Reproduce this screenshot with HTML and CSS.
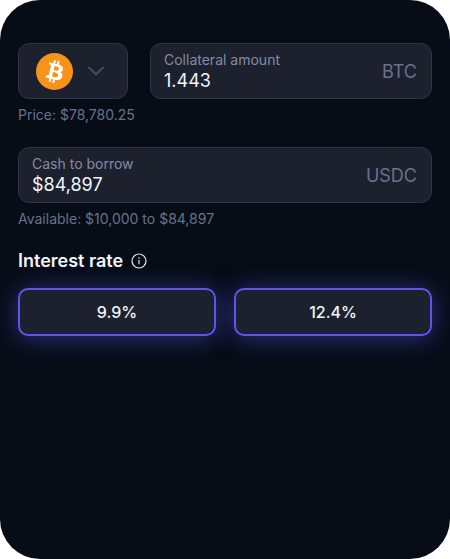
FILE: index.html
```
<!DOCTYPE html>
<html lang="en">
  <head>
    <meta charset="utf-8">
    <meta name="viewport" content="width=device-width, initial-scale=1">
    <title>Borrow</title>
    <link rel="stylesheet" href="styles.css">
  </head>
  <body>
    <form class="loan-card">
      <div class="collateral-row">
        <div class="coin-picker">
          <svg class="coin-icon" viewBox="0 0 32 32" aria-hidden="true">
            <circle cx="16" cy="16" r="16" fill="#f7931a"/>
            <path fill="#fff" d="M23.189 14.02c.314-2.096-1.283-3.223-3.465-3.975l.708-2.84-1.728-.43-.69 2.765c-.454-.114-.92-.22-1.385-.326l.695-2.783L15.596 6l-.708 2.839c-.376-.086-.746-.17-1.104-.26l.002-.009-2.384-.595-.46 1.846s1.283.294 1.256.312c.7.175.826.638.805 1.006l-.806 3.235c.048.012.11.03.18.057l-.183-.045-1.13 4.532c-.086.212-.303.531-.793.41.018.025-1.256-.313-1.256-.313l-.858 1.978 2.25.561c.418.105.828.215 1.231.318l-.715 2.872 1.727.43.708-2.84c.472.127.93.245 1.378.357l-.706 2.828 1.728.43.715-2.866c2.948.558 5.164.333 6.097-2.333.752-2.146-.037-3.385-1.588-4.192 1.13-.26 1.98-1.003 2.207-2.538zm-3.95 5.538c-.533 2.147-4.148.986-5.32.695l.95-3.805c1.172.293 4.929.872 4.37 3.11zm.535-5.569c-.487 1.953-3.495.96-4.47.717l.86-3.45c.975.243 4.118.696 3.61 2.733z"/>
          </svg>
          <svg class="chevron" viewBox="0 0 18 10" aria-hidden="true">
            <path d="M1.500 1.200L9 8.400l7.500-7.200" fill="none" stroke="#4b556b" stroke-width="1.700"/>
          </svg>
          <select class="coin-select" aria-label="Collateral coin">
            <option value="BTC">BTC</option>
          </select>
        </div>
        <div class="field">
          <div class="field-main">
            <label class="field-label" for="collateral">Collateral amount</label>
            <input class="field-input" type="text" id="collateral" value="1.443" inputmode="decimal">
          </div>
          <span class="field-unit">BTC</span>
        </div>
      </div>
      <p class="hint">Price: $78,780.25</p>

      <div class="field cash-field">
        <div class="field-main">
          <label class="field-label" for="cash">Cash to borrow</label>
          <input class="field-input" type="text" id="cash" value="$84,897" inputmode="decimal">
        </div>
        <span class="field-unit">USDC</span>
      </div>
      <p class="hint">Available: $10,000 to $84,897</p>

      <h2 class="rate-title">
        Interest rate
        <svg class="info-icon" viewBox="0 0 16 16" aria-hidden="true">
          <circle cx="8" cy="8" r="7" fill="none" stroke="#e8ecf5" stroke-width="1.200"/>
          <path d="M8 7v4.200" stroke="#e8ecf5" stroke-width="1.200"/>
          <circle cx="8" cy="5" r=".8" fill="#e8ecf5"/>
        </svg>
      </h2>
      <div class="rate-row">
        <button type="button" class="rate-btn">9.9%</button>
        <button type="button" class="rate-btn">12.4%</button>
      </div>
    </form>
  </body>
</html>
```

FILE: styles.css
```
* {
  box-sizing: border-box;
}

body {
  margin: 0;
  background: #fff;
  font-family: Inter, "Liberation Sans", sans-serif;
  color: #f1f4fb;
}

.loan-card {
  min-height: 100vh;
  padding: 43px 18px;
  background: #060d17;
  border-radius: 40px;
  overflow: hidden;
}

.collateral-row {
  display: grid;
  grid-template-columns: 110px 1fr;
  gap: 22px;
}

.coin-picker,
.field {
  display: flex;
  align-items: center;
  height: 56px;
  background: #1c212d;
  border: 1px solid #2f3446;
  border-radius: 11px;
}

.coin-picker {
  position: relative;
  gap: 14px;
  padding-left: 17px;
}

.coin-icon {
  width: 37px;
  height: 37px;
}

.chevron {
  width: 18px;
  height: 10px;
}

/* native drop-down sits over the drawn icon and arrow */
.coin-select {
  position: absolute;
  inset: 0;
  width: 100%;
  opacity: 0;
  cursor: pointer;
}

.field {
  padding: 0 14px 0 13px;
}

.field-main {
  flex: 1;
  min-width: 0;
  padding-top: 1px;
}

.field-label {
  display: block;
  font-size: 14px;
  line-height: 18px;
  color: #838ca6;
}

.field-input {
  display: block;
  width: 100%;
  height: 24px;
  padding: 0;
  border: 0;
  outline: 0;
  background: none;
  font-family: inherit;
  font-size: 18px;
  color: #f1f4fb;
}

.field-unit {
  font-size: 18px;
  color: #68728c;
}

.hint {
  margin: 6px 0 0;
  font-size: 14px;
  line-height: 20px;
  color: #68728c;
}

.cash-field {
  margin-top: 22px;
}

.rate-title {
  display: flex;
  align-items: center;
  gap: 8px;
  margin: 20px 0 15px;
  font-size: 18px;
  line-height: 24px;
  font-weight: 600;
}

.info-icon {
  width: 16px;
  height: 16px;
}

.rate-row {
  display: grid;
  grid-template-columns: 1fr 1fr;
  gap: 18px;
}

.rate-btn {
  height: 48px;
  padding: 0;
  background: #1c212d;
  border: 2px solid #5d56ee;
  border-radius: 10px;
  box-shadow: 0 2px 24px rgba(91, 84, 232, 0.5);
  font-family: inherit;
  font-size: 16px;
  font-weight: 500;
  color: #f1f4fb;
  cursor: pointer;
}
```
